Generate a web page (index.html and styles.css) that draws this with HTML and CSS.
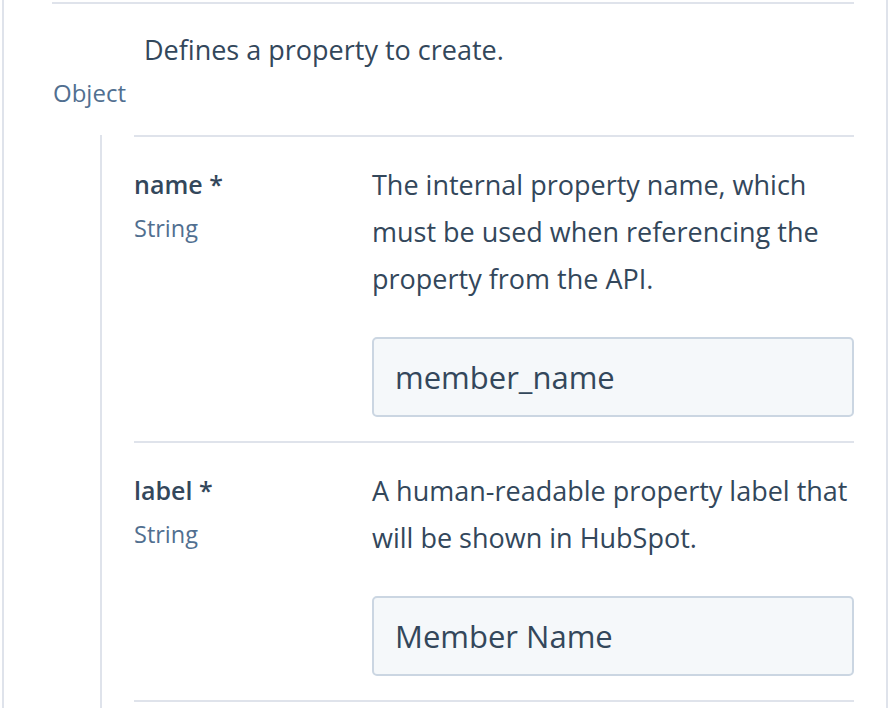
FILE: index.html
```html
<!DOCTYPE html>
<html>
<head>
<meta charset="utf-8">
<link rel="stylesheet" href="styles.css">
</head>
<body>
<div class="panel">
  <div class="row">
    <div class="row-head">
      <p class="desc top-desc">Defines a property to create.</p>
      <div class="type obj-type">Object</div>
    </div>
    <div class="children">
      <div class="child">
        <div class="name-col">
          <div class="name">name *</div>
          <div class="type">String</div>
        </div>
        <div class="desc-col">
          <p class="desc">The internal property name, which<br>must be used when referencing the<br>property from the API.</p>
          <div class="input">member_name</div>
        </div>
      </div>
      <div class="child">
        <div class="name-col">
          <div class="name">label *</div>
          <div class="type">String</div>
        </div>
        <div class="desc-col">
          <p class="desc">A human-readable property label that<br>will be shown in HubSpot.</p>
          <div class="input">Member Name</div>
        </div>
      </div>
      <div class="child last"></div>
    </div>
  </div>
</div>
</body>
</html>
```
FILE: styles.css
```css
html, body {
  margin: 0;
  padding: 0;
  background: #ffffff;
}
body {
  font-family: "Open Sans", Lato, sans-serif;
  color: #33475b;
  overflow: hidden;
}
.panel {
  margin-left: 2px;
  border-left: 2px solid #dfe3eb;
  border-right: 2px solid #dfe3eb;
  height: 708px;
  padding: 2px 32px 0 48px;
  box-sizing: border-box;
}
.row {
  border-top: 2px solid #dfe3eb;
}
.row-head {
  padding-top: 22px;
  padding-bottom: 22px;
}
.desc {
  margin: 0;
  font-size: 27px;
  line-height: 47px;
  color: #33475b;
  white-space: nowrap;
}
.top-desc {
  padding-left: 92px;
}
.type {
  font-size: 23.5px;
  line-height: 40px;
  color: #516f90;
}
.obj-type {
  padding-left: 1px;
  font-size: 24px;
}
.children {
  margin-left: 48px;
  border-left: 2px solid #dfe3eb;
  padding-left: 32px;
}
.child {
  border-top: 2px solid #dfe3eb;
  display: grid;
  grid-template-columns: 238px 1fr;
  padding: 24px 0 24px 0;
}
.child.last {
  padding: 0;
  height: 20px;
}
.name {
  font-size: 25px;
  line-height: 47px;
  font-weight: 600;
  color: #33475b;
}
.input {
  margin-top: 35px;
  height: 80px;
  box-sizing: border-box;
  border: 2px solid #cbd6e2;
  border-radius: 5px;
  background: #f5f8fa;
  padding-left: 21px;
  display: flex;
  align-items: center;
  font-size: 31px;
  color: #33475b;
}
```
